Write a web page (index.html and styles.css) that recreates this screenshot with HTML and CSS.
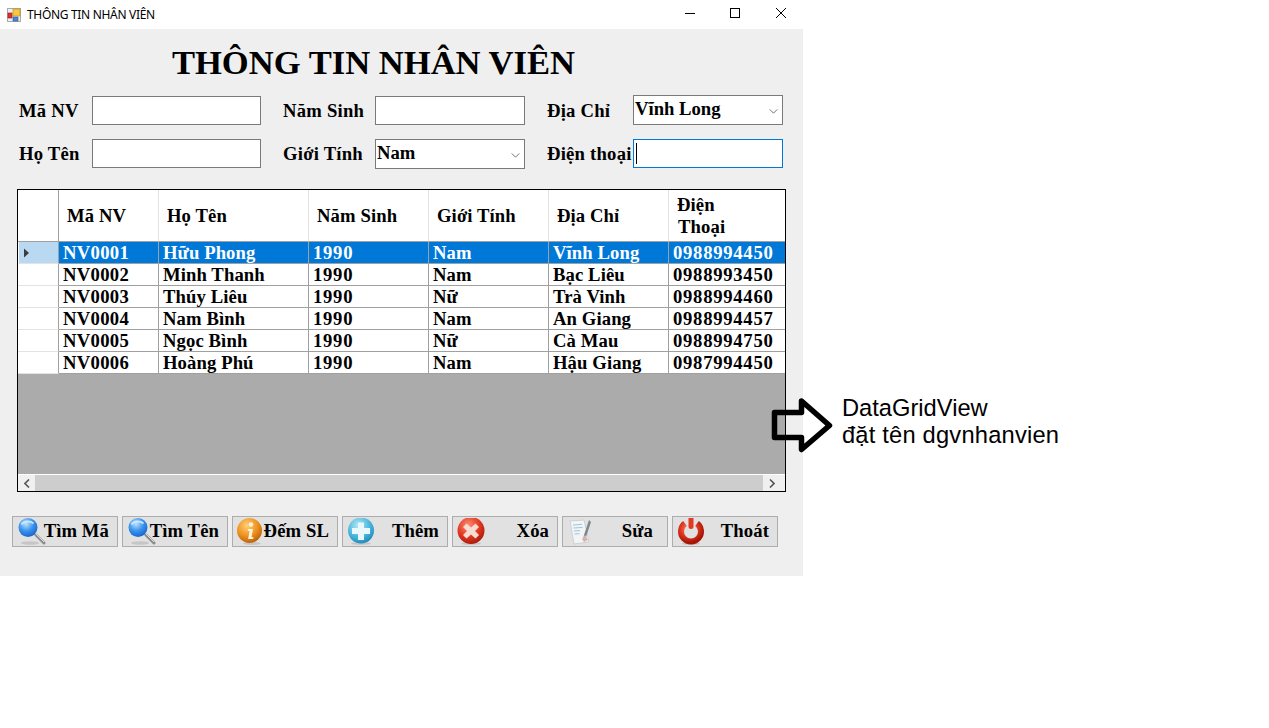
FILE: index.html
```html
<!DOCTYPE html>
<html lang="vi">
<head>
<meta charset="utf-8">
<title>THÔNG TIN NHÂN VIÊN</title>
<link rel="stylesheet" href="styles.css">
</head>
<body>
<svg class="defs" width="0" height="0" aria-hidden="true">
  <defs>
    <radialGradient id="gBlue" cx="40%" cy="30%" r="75%"><stop offset="0" stop-color="#bfe3ff"/><stop offset=".5" stop-color="#3b95ee"/><stop offset="1" stop-color="#1560c8"/></radialGradient>
    <radialGradient id="gOrange" cx="40%" cy="30%" r="75%"><stop offset="0" stop-color="#ffd07a"/><stop offset=".55" stop-color="#ee9420"/><stop offset="1" stop-color="#b75c08"/></radialGradient>
    <radialGradient id="gCyan" cx="40%" cy="30%" r="75%"><stop offset="0" stop-color="#b5e8f6"/><stop offset=".55" stop-color="#4fbadf"/><stop offset="1" stop-color="#1c86b8"/></radialGradient>
    <radialGradient id="gRed" cx="40%" cy="30%" r="75%"><stop offset="0" stop-color="#fb8d74"/><stop offset=".55" stop-color="#e23a22"/><stop offset="1" stop-color="#a81508"/></radialGradient>
  </defs>
</svg>
<div class="window">
  <header class="titlebar">
    <svg class="appicon" viewBox="0 0 14 14"><rect x=".5" y=".5" width="13" height="13" fill="#eee" stroke="#aaa"/><rect x="6" y="1" width="7" height="7" fill="#f7c93e" stroke="#b98a10" stroke-width=".6"/><rect x="1" y="5" width="4" height="5" fill="#d9362a" stroke="#8c1a12" stroke-width=".6"/><rect x="6" y="9" width="5" height="4" fill="#4f86d9" stroke="#2a558f" stroke-width=".6"/></svg>
    <span class="titletext">THÔNG TIN NHÂN VIÊN</span>
    <div class="winctrls">
      <svg class="winbtn" viewBox="0 0 46 29"><path d="M20 13.500h10" stroke="#000" fill="none"/></svg>
      <svg class="winbtn" viewBox="0 0 46 29"><rect x="19.500" y="8.500" width="9" height="9" stroke="#000" fill="none"/></svg>
      <svg class="winbtn" viewBox="0 0 46 29"><path d="M19 8l10 10M29 8l-10 10" stroke="#000" fill="none"/></svg>
    </div>
  </header>
  <main class="form">
    <h1 class="heading">THÔNG TIN NHÂN VIÊN</h1>
    <div class="fields">
      <label class="lbl">Mã NV</label><div class="box"></div>
      <label class="lbl lbl-mid">Năm Sinh</label><div class="box"></div>
      <label class="lbl lbl-mid">Địa Chỉ</label>
      <div class="box combo combo-raised"><span>Vĩnh Long</span><svg class="chev" viewBox="0 0 10 6"><path d="M.5 .5L5 5 9.500 .5" fill="none" stroke="#555"/></svg></div>
      <label class="lbl">Họ Tên</label><div class="box"></div>
      <label class="lbl lbl-mid">Giới Tính</label>
      <div class="box combo"><span>Nam</span><svg class="chev" viewBox="0 0 10 6"><path d="M.5 .5L5 5 9.500 .5" fill="none" stroke="#555"/></svg></div>
      <label class="lbl lbl-mid">Điện thoại</label>
      <div class="box focus"><i class="caret"></i></div>
    </div>

    <section class="grid">
      <table class="dgv">
        <colgroup><col class="c0"><col class="c1"><col class="c2"><col class="c3"><col class="c3"><col class="c3"><col class="c4"></colgroup>
        <thead>
          <tr><th class="rh"></th><th>Mã NV</th><th>Họ Tên</th><th>Năm Sinh</th><th>Giới Tính</th><th>Địa Chỉ</th><th class="last">Điện<br><span class="indent">Thoại</span></th></tr>
        </thead>
        <tbody>
          <tr class="sel"><td class="rh"><svg class="rowmark" viewBox="0 0 5 9"><path d="M0 0l5 4.500-5 4.500z" fill="#3c3c3c"/></svg></td><td>NV0001</td><td>Hữu Phong</td><td>1990</td><td>Nam</td><td>Vĩnh Long</td><td>0988994450</td></tr>
          <tr><td class="rh"></td><td>NV0002</td><td>Minh Thanh</td><td>1990</td><td>Nam</td><td>Bạc Liêu</td><td>0988993450</td></tr>
          <tr><td class="rh"></td><td>NV0003</td><td>Thúy Liêu</td><td>1990</td><td>Nữ</td><td>Trà Vinh</td><td>0988994460</td></tr>
          <tr><td class="rh"></td><td>NV0004</td><td>Nam Bình</td><td>1990</td><td>Nam</td><td>An Giang</td><td>0988994457</td></tr>
          <tr><td class="rh"></td><td>NV0005</td><td>Ngọc Bình</td><td>1990</td><td>Nữ</td><td>Cà Mau</td><td>0988994750</td></tr>
          <tr><td class="rh"></td><td>NV0006</td><td>Hoàng Phú</td><td>1990</td><td>Nam</td><td>Hậu Giang</td><td>0987994450</td></tr>
        </tbody>
      </table>
      <div class="empty"></div>
      <div class="hscroll">
        <div class="sbtn sbtn-l"><svg viewBox="0 0 6 9" class="sarrow"><path d="M5 .5L1 4.500l4 4" fill="none" stroke="#555" stroke-width="1.600"/></svg></div>
        <div class="thumb"></div>
        <div class="sbtn sbtn-r"><svg viewBox="0 0 6 9" class="sarrow"><path d="M1 .5l4 4-4 4" fill="none" stroke="#555" stroke-width="1.600"/></svg></div>
      </div>
    </section>

    <div class="actions">
      <button class="btn">
        <svg class="ico ico-search" viewBox="0 0 28 28"><ellipse cx="12" cy="25" rx="9" ry="1.800" fill="#bbb" opacity=".7"/><path d="M18 17l8 8" stroke="#8b8b8b" stroke-width="3" stroke-linecap="round"/><path d="M18 16l8 8" stroke="#dcdcdc" stroke-width="1"/><circle cx="10" cy="9.500" r="9.500" fill="url(#gBlue)"/><path d="M3.500 6.500a7 5 0 0 1 12-1" stroke="#d8efff" stroke-width="2" fill="none" opacity=".8"/></svg>
        <span>Tìm Mã</span>
      </button>
      <button class="btn">
        <svg class="ico ico-search" viewBox="0 0 28 28"><ellipse cx="12" cy="25" rx="9" ry="1.800" fill="#bbb" opacity=".7"/><path d="M18 17l8 8" stroke="#8b8b8b" stroke-width="3" stroke-linecap="round"/><path d="M18 16l8 8" stroke="#dcdcdc" stroke-width="1"/><circle cx="10" cy="9.500" r="9.500" fill="url(#gBlue)"/><path d="M3.500 6.500a7 5 0 0 1 12-1" stroke="#d8efff" stroke-width="2" fill="none" opacity=".8"/></svg>
        <span>Tìm Tên</span>
      </button>
      <button class="btn">
        <svg class="ico ico-info" viewBox="0 0 28 28"><ellipse cx="15" cy="25.500" rx="9" ry="1.500" fill="#bbb" opacity=".7"/><circle cx="12.500" cy="12.500" r="12.500" fill="url(#gOrange)"/><circle cx="14" cy="6.500" r="2.200" fill="#fff3dc"/><path d="M11 11h5l-1.500 8 2 .2-.4 1.800h-5l1.500-8-2-.2z" fill="#fff3dc"/></svg>
        <span>Đếm SL</span>
      </button>
      <button class="btn">
        <svg class="ico ico-round" viewBox="0 0 28 28"><ellipse cx="14" cy="25.500" rx="10" ry="1.500" fill="#bbb" opacity=".7"/><circle cx="14" cy="12.500" r="13" fill="url(#gCyan)"/><path d="M11 4.500h6v5.500h6v6h-6v6h-6v-6h-6v-6h6z" fill="#eaf7fb"/></svg>
        <span>Thêm</span>
      </button>
      <button class="btn">
        <svg class="ico ico-round" viewBox="0 0 28 28"><ellipse cx="14" cy="25.500" rx="10" ry="1.500" fill="#bbb" opacity=".7"/><circle cx="14" cy="12.500" r="13.500" fill="url(#gRed)"/><path d="M9.500 5.500l4.500 4 4.500-4 3.500 3.500-4 4 4 4-3.500 3.500-4.500-4-4.500 4-3.500-3.500 4-4-4-4z" fill="#f7dcd2"/></svg>
        <span>Xóa</span>
      </button>
      <button class="btn btn-edit">
        <svg class="ico ico-note" viewBox="0 0 24 28"><path d="M1 3l14-1 5 22-15 2z" fill="#f2f4f5" stroke="#c6cacc" stroke-width=".8"/><path d="M4 7l9-.6M4.500 10l9-.6M5 13l6-.4M5.500 16l5-.3" stroke="#9cc7de" stroke-width="1"/><path d="M20 2l-5 15-1 5 3-3 5-15z" fill="#7c8a90"/><path d="M13 21l3-4 3 5-4 2z" fill="#cfb6ae"/></svg>
        <span>Sửa</span>
      </button>
      <button class="btn">
        <svg class="ico ico-round" viewBox="0 0 28 28"><ellipse cx="14" cy="25.500" rx="9" ry="1.500" fill="#bbb" opacity=".7"/><path d="M8 5.500a10 10 0 1 0 12 0" fill="none" stroke="url(#gRed)" stroke-width="6"/><path d="M14 .5v8" stroke="#e23a22" stroke-width="5" stroke-linecap="round"/></svg>
        <span>Thoát</span>
      </button>
    </div>
  </main>
</div>

<aside class="note">
  <svg class="arrow" viewBox="0 0 66 60"><path d="M5.500 17.500H32.500V6L60.500 30.500 32.500 54.500V42.500H5.500z" fill="none" stroke="#000" stroke-width="5.500" stroke-linejoin="round"/></svg>
  <p class="notetext">DataGridView<br><span class="noteline">đặt tên dgvnhanvien</span></p>
</aside>
</body>
</html>
```
FILE: styles.css
```css
* { box-sizing: border-box; }
html, body { margin: 0; height: 100%; background: #fff; overflow: hidden; }
body { font-family: "Liberation Serif", serif; color: #000; position: relative; }
.defs { position: absolute; }

.window { width: 803px; height: 576px; background: #efefef; display: flex; flex-direction: column; }
.titlebar { height: 29px; background: #fff; display: flex; align-items: center; padding-left: 7px; }
.appicon { width: 14px; height: 14px; margin-right: 6px; }
.titletext { font: 12px "Noto Sans", sans-serif; color: #000; letter-spacing: -.32px; }
.winctrls { margin-left: auto; display: flex; }
.winbtn { width: 46px; height: 29px; display: block; }

.form { flex: 1; display: flex; flex-direction: column; padding: 0 0 0 17px; }
.heading { margin: 10px 0 0; height: 47px; line-height: 47px; font-size: 34.6px; font-weight: bold; width: 713px; text-align: center; }

.fields { display: grid; grid-template-columns: 75px 169px 114px 150px 108px 150px; grid-template-rows: 29px 29px; row-gap: 14px; margin-top: 10px; align-items: stretch; }
.lbl { font-size: 18.67px; font-weight: bold; padding-left: 2px; padding-top: 5px; line-height: 20px; white-space: nowrap; letter-spacing: .22px; }
.lbl-mid { padding-left: 22px; }
.box { background: #fff; border: 1px solid #7a7a7a; position: relative; }
.focus { border-color: #0078d7; }
.combo { font-size: 18.67px; font-weight: bold; line-height: 22px; padding: 2px 2px 2px 1px; height: 30px; display: flex; justify-content: space-between; }
.combo-raised { margin-top: -1px; }
.chev { width: 9px; height: 5px; margin: 11px 2px 0 0; }
.caret { position: absolute; left: 2px; top: 3px; width: 1px; height: 21px; background: #000; }

.grid { margin-top: 21px; width: 769px; height: 303px; border: 1px solid #000; display: flex; flex-direction: column; background: #ababab; }
.dgv { width: 767px; border-collapse: separate; border-spacing: 0; table-layout: fixed; background: #fff; font-size: 18.67px; font-weight: bold; }
.c0 { width: 41px; }
.c1 { width: 100px; }
.c2 { width: 150px; }
.c3 { width: 120px; }
.c4 { width: 116px; }
.dgv th { height: 52px; padding: 0 0 0 8px; text-align: left; font-weight: bold; line-height: 22px; letter-spacing: .1px; border-right: 1px solid #e3e3e3; border-bottom: 1px solid #a0a0a0; }
.dgv th.rh { border-right-color: #a0a0a0; padding: 0; }
.dgv th.last { border-right: 0; }
.indent { margin-left: 1px; }
.dgv td { height: 22px; padding: 0 0 0 4px; line-height: 21px; letter-spacing: .1px; border-right: 1px solid #a0a0a0; border-bottom: 1px solid #a0a0a0; white-space: nowrap; overflow: hidden; }
.dgv td:nth-child(2) { letter-spacing: .3px; }
.dgv td:nth-child(4), .dgv td:nth-child(7) { letter-spacing: .72px; }
.dgv td:last-child { border-right: 0; }
.dgv td.rh { padding: 0; vertical-align: top; border-bottom-color: #e3e3e3; background: #fff; }
.sel td { background: #0078d7; color: #fff; }
.dgv .sel td.rh { background: #b9d9f2; border-left: 1px solid #fff; }
.rowmark { display: block; width: 5px; height: 10px; margin: 6px 0 0 5px; }

.empty { height: 100px; background: #ababab; flex: none; }
.hscroll { height: 17px; flex: none; display: flex; background: #f0f0f0; border-top: 1px solid #fff; }
.sbtn { flex: none; display: flex; align-items: center; justify-content: center; }
.sbtn-l { width: 17px; }
.sbtn-r { width: 22px; padding-right: 5px; }
.sarrow { width: 6px; height: 9px; }
.thumb { flex: 1; background: #cdcdcd; }

.actions { display: flex; gap: 4px; margin: 24px 0 0 -5px; }
.btn { width: 106px; height: 31px; padding: 0 8px 0 5px; background: #e1e1e1; border: 1px solid #adadad; display: flex; justify-content: space-between; align-items: center; font: bold 18.67px "Liberation Serif", serif; color: #000; letter-spacing: .1px; white-space: nowrap; }
.btn span { position: relative; top: -1px; }
.btn-edit span { margin-right: 6px; }
.ico { flex: none; align-self: flex-start; margin-top: 1px; display: block; width: 28px; height: 28px; }
.ico-search { margin-right: -8px; }
.ico-info { margin: 1px -6px 0 -1px; }
.ico-round { margin-left: -1px; }
.ico-note { width: 24px; margin-left: 1px; }

.note { position: absolute; left: 769px; top: 395px; width: 320px; }
.arrow { position: absolute; left: 0; top: 0; width: 66px; height: 60px; }
.notetext { position: absolute; left: 73px; top: 0; margin: 0; white-space: nowrap; font: 23.7px/27px "Liberation Sans", sans-serif; color: #000; }
.noteline { letter-spacing: .2px; }
```
